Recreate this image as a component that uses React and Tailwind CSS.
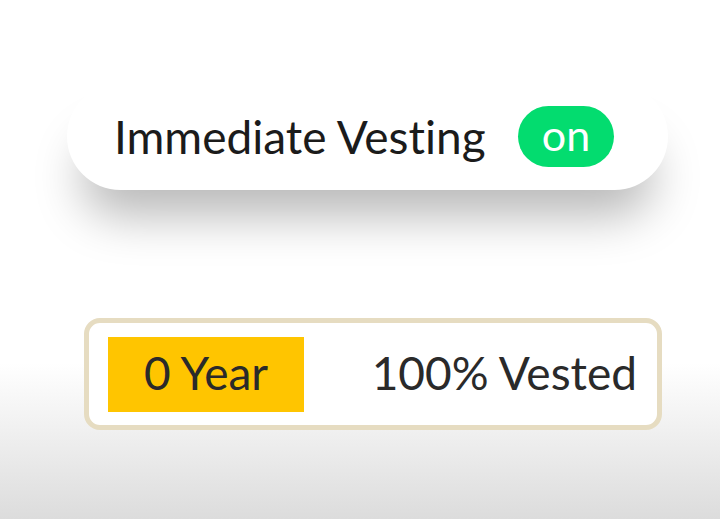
import React from 'react';

const font = { fontFamily: 'Lato, "Noto Sans", sans-serif' };

const VestingToggle = () => (
    <div className="ml-[67px] mt-[83px] w-[601px] h-[107px] flex items-center rounded-full bg-white shadow-[0_40px_48px_-14px_rgba(0,0,0,0.28)]">
        <span className="ml-[47px] text-[46px] leading-none text-[#1b1b1b]">Immediate Vesting</span>
        <span className="ml-auto mr-[54px] w-[96px] h-[61px] rounded-full bg-[#03dc6f] flex items-center justify-center text-white text-[43px] leading-none pb-[5px]">
            on
        </span>
    </div>
);

const VestingRow = () => (
    <div className="ml-[84px] mt-[128px] w-[578px] h-[112px] rounded-[16px] border-[5px] border-[#e6dcc1] bg-white flex items-center">
        <div className="ml-[19px] w-[196px] h-[75px] bg-[#ffc500] flex items-center justify-center text-[46px] text-[#2a2a2a] leading-none pb-[2px]">
            0 Year
        </div>
        <span className="ml-auto mr-[20px] text-[46px] text-[#2a2a2a] leading-none pb-[2px]">100% Vested</span>
    </div>
);

export default function App() {
    return (
        <div className="w-[720px] h-[519px] overflow-hidden flex flex-col [font-variant-ligatures:none] bg-[linear-gradient(to_bottom,#ffffff_0%,#ffffff_70%,#f0f0f0_83%,#dcdcdc_100%)]" style={font}>
            <VestingToggle />
            <VestingRow />
        </div>
    );
}
